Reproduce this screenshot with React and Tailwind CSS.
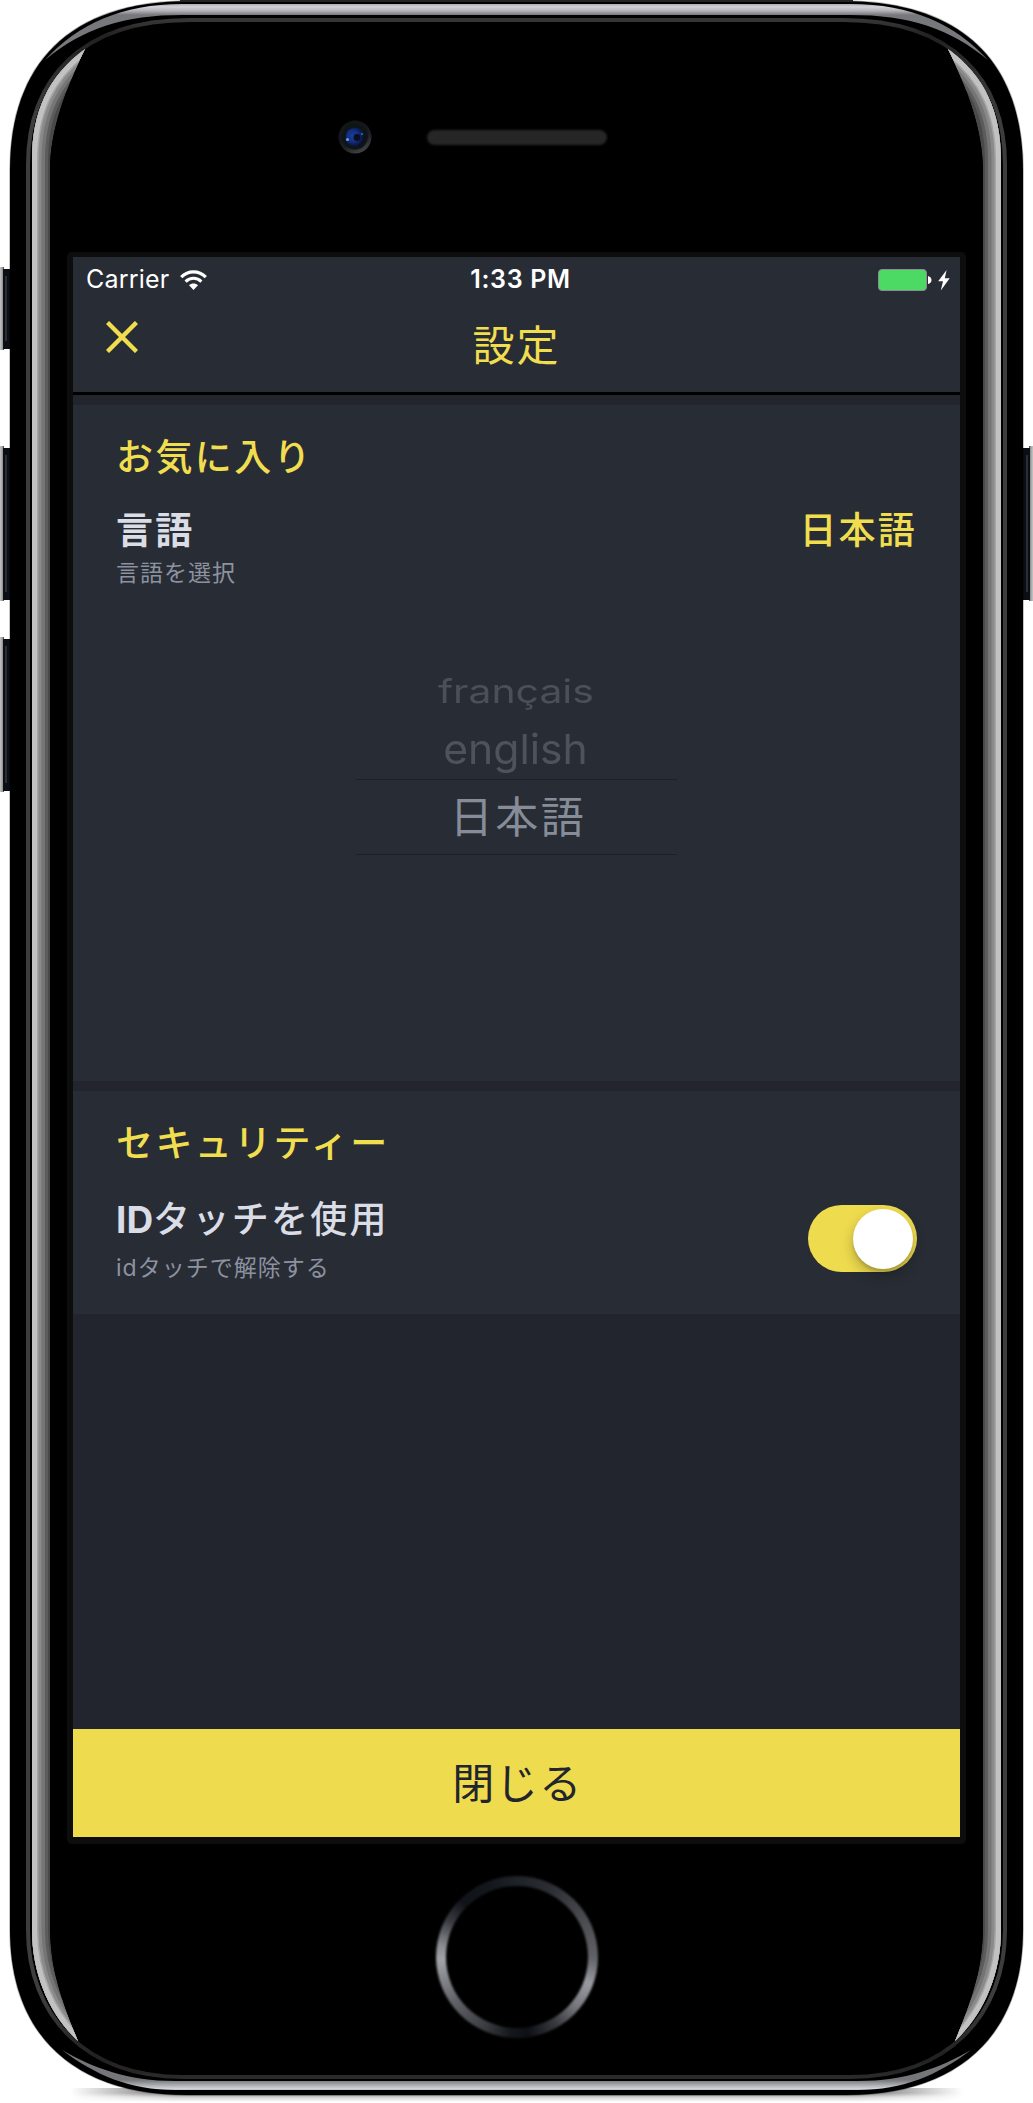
import React from "react";

const BODY =
  "M10 170C10 65 68 1 190 1H843C965 1 1023 65 1023 170V1930C1023 2036 958 2095 846 2095H187C75 2095 10 2036 10 1930Z";
const RING =
  "M28 165C28 80 80 20 190 20H843C953 20 1005 80 1005 165V1930C1005 2015 948 2077 850 2077H183C85 2077 28 2015 28 1930Z";
const GLINT =
  "M85 49C48 76 32 112 32 160V1930C32 1975 50 2015 78 2041C62 2003 50 1970 50 1925V170C50 130 66 88 85 49Z";
const GLINT_EDGE = "M85 49C48 76 32 112 32 160V1930C32 1975 50 2015 78 2041";

function SideGlint() {
  return (
    <g clipPath="url(#glintClip)" fill="none">
      <path d={GLINT} fill="#4a4a4a" />
      <path d={GLINT_EDGE} stroke="#5c5c5c" strokeWidth="32" />
      <path d={GLINT_EDGE} stroke="#757575" strokeWidth="26" />
      <path d={GLINT_EDGE} stroke="#8a8a8a" strokeWidth="19" />
      <path d={GLINT_EDGE} stroke="#a5a5a5" strokeWidth="13" />
      <path d={GLINT_EDGE} stroke="#c2c2c2" strokeWidth="10" />
    </g>
  );
}

function SideButton({ y, h }) {
  return (
    <g>
      <rect x="0" y={y} width="4" height={h} fill="url(#btn)" />
      <rect x="3" y={y + 2} width="9" height={h - 3} fill="#0b0e14" />
      <rect x="5" y={y + 9} width="2" height={h - 18} fill="#2b2e36" />
    </g>
  );
}

function PhoneShell() {
  return (
    <svg className="absolute inset-0" width="1033" height="2103" viewBox="0 0 1033 2103" aria-hidden="true">
      <defs>
        <linearGradient id="btn">
          <stop offset="0" stopColor="#c4c6c6" />
          <stop offset="0.6" stopColor="#9c9e9e" />
          <stop offset="1" stopColor="#333" />
        </linearGradient>
        <linearGradient id="topBand" x1="0" y1="4" x2="0" y2="15" gradientUnits="userSpaceOnUse">
          <stop offset="0" stopColor="#aaaab0" />
          <stop offset="0.25" stopColor="#d2d2d8" />
          <stop offset="0.6" stopColor="#b4b4ba" />
          <stop offset="1" stopColor="#77787c" />
        </linearGradient>
        <linearGradient id="bottomBand" x1="0" y1="2080" x2="0" y2="2091" gradientUnits="userSpaceOnUse">
          <stop offset="0" stopColor="#75767a" />
          <stop offset="0.5" stopColor="#b0b1b6" />
          <stop offset="0.8" stopColor="#d4d5da" />
          <stop offset="1" stopColor="#a0a1a5" />
        </linearGradient>
        <linearGradient id="ringTone" x1="0" y1="20" x2="0" y2="2077" gradientUnits="userSpaceOnUse">
          <stop offset="0" stopColor="#363636" />
          <stop offset="0.008" stopColor="#222" />
          <stop offset="0.05" stopColor="#3e3e3e" />
          <stop offset="0.96" stopColor="#3e3e3e" />
          <stop offset="0.99" stopColor="#222" />
          <stop offset="1" stopColor="#2a2a2a" />
        </linearGradient>
        <linearGradient id="under" x1="0" y1="2093" x2="0" y2="2102" gradientUnits="userSpaceOnUse">
          <stop offset="0" stopColor="#6d6d6d" />
          <stop offset="0.45" stopColor="#cfcfcf" />
          <stop offset="1" stopColor="#fff" />
        </linearGradient>
        <linearGradient id="fade">
          <stop offset="0" stopColor="#000" />
          <stop offset="0.12" stopColor="#fff" />
          <stop offset="0.88" stopColor="#fff" />
          <stop offset="1" stopColor="#000" />
        </linearGradient>
        <mask id="fadeMask">
          <rect x="70" y="2080" width="893" height="23" fill="url(#fade)" />
        </mask>
        <clipPath id="glintClip">
          <path d={GLINT} />
        </clipPath>
        <filter id="soft">
          <feGaussianBlur stdDeviation="0.6" />
        </filter>
      </defs>
      <rect x="70" y="2088" width="893" height="15" fill="url(#under)" mask="url(#fadeMask)" />
      <SideButton y={267} h={83} />
      <SideButton y={446} h={155} />
      <SideButton y={637} h={155} />
      <g transform="translate(1033 0) scale(-1 1)">
        <SideButton y={446} h={155} />
      </g>
      <path d={BODY} fill="#000" stroke="#000" strokeOpacity="0.3" strokeWidth="1.5" />
      <path d="M180 1H853" stroke="#242424" strokeWidth="2" />
      <g filter="url(#soft)">
        <path
          d="M45 60C78 24 122 4 182 4H851C911 4 955 24 988 60C950 28 908 15 851 15H182C125 15 83 28 45 60Z"
          fill="url(#topBand)"
        />
        <path
          d="M62 2050C95 2075 130 2090 175 2090H858C903 2090 938 2075 971 2050C940 2068 905 2081 858 2081H175C128 2081 93 2068 62 2050Z"
          fill="url(#bottomBand)"
        />
        <path d={RING} fill="none" stroke="url(#ringTone)" strokeWidth="4" />
        <SideGlint />
        <g transform="translate(1033 0) scale(-1 1)">
          <SideGlint />
        </g>
      </g>
      <rect x="67" y="252" width="899" height="1592" rx="5" fill="#0f0f0f" filter="url(#soft)" />
    </svg>
  );
}

function Camera() {
  return (
    <svg width="36" height="36" viewBox="0 0 36 36" aria-hidden="true">
      <defs>
        <linearGradient id="camRim" x1="0.2" y1="0" x2="0.75" y2="1">
          <stop offset="0" stopColor="#101216" />
          <stop offset="0.6" stopColor="#1b1c20" />
          <stop offset="1" stopColor="#46474c" />
        </linearGradient>
        <radialGradient id="lens" cx="0.4" cy="0.45" r="0.6">
          <stop offset="0" stopColor="#1a3f9c" />
          <stop offset="0.55" stopColor="#122c7c" />
          <stop offset="1" stopColor="#080c1e" />
        </radialGradient>
        <filter id="lensSoft">
          <feGaussianBlur stdDeviation="0.7" />
        </filter>
      </defs>
      <g filter="url(#lensSoft)">
        <circle cx="18" cy="18" r="16.5" fill="url(#camRim)" />
        <circle cx="18" cy="17.5" r="13" fill="#111318" />
        <circle cx="18" cy="18" r="9.5" fill="url(#lens)" />
        <circle cx="20" cy="18.5" r="3.4" fill="#070c24" />
        <circle cx="10.5" cy="20.5" r="1.6" fill="#5da0dc" />
        <circle cx="25" cy="15" r="1.1" fill="#2f6bc0" />
      </g>
    </svg>
  );
}

function HomeButton() {
  return (
    <div className="flex size-[162px] items-center justify-center rounded-full bg-[conic-gradient(#20222a_0deg,#2c2d33_25deg,#4a4b50_60deg,#606166_90deg,#9a9ba0_110deg,#77787d_130deg,#38393e_150deg,#0e1015_172deg,#15171c_185deg,#3c3d42_205deg,#626368_235deg,#a2a3a8_268deg,#8c8d92_278deg,#3a3b40_298deg,#101318_315deg,#14171c_340deg,#20222a_360deg)] blur-[0.8px]">
      <div className="size-[142px] rounded-full bg-black" />
    </div>
  );
}

function WifiIcon() {
  return (
    <svg width="27" height="21" viewBox="0 0 27 21" fill="none" stroke="#fff" aria-hidden="true">
      <path d="M1.2 7.2C8.2 0 18.8 0 25.8 7.2" strokeWidth="3.2" />
      <path d="M5.6 11.6C10.1 7.2 16.9 7.2 21.4 11.6" strokeWidth="3" />
      <path d="M9 15.3C11.3 12.9 15.7 12.9 18 15.3L13.5 20Z" fill="#fff" stroke="none" />
    </svg>
  );
}

function Battery() {
  return (
    <div className="flex items-center">
      <div className="h-[22px] w-[49px] rounded-[4px] border-[1.5px] border-[#8b8d93] bg-[#4cd964]" />
      <svg className="ml-[1px]" width="4" height="8" viewBox="0 0 4 8" aria-hidden="true">
        <path d="M0 0Q3.5 1 3.5 4T0 8Z" fill="#fff" />
      </svg>
      <svg className="ml-[6px]" width="12" height="21" viewBox="0 0 12 21" aria-hidden="true">
        <path d="M8.6 0L0.2 11.3H5L2.8 20.6L11.7 8.2H6.8Z" fill="#fff" />
      </svg>
    </div>
  );
}

function StatusBar() {
  return (
    <div className="grid h-[46px] grid-cols-3 items-center pr-[10px] pl-[13px] text-[25px] text-white">
      <div className="flex items-center gap-[11px]">
        <span className="tracking-[0.2px]">Carrier</span>
        <WifiIcon />
      </div>
      <span className="pl-[5px] text-center font-semibold tracking-[0.7px]">1:33 PM</span>
      <div className="flex justify-end">
        <Battery />
      </div>
    </div>
  );
}

function NavBar() {
  return (
    <div className="grid h-[92px] grid-cols-3 border-b-[3px] border-black text-[#f1de4f]">
      <button className="ml-[33px] mt-[18px] size-[32px]" aria-label="close">
        <svg width="32" height="32" viewBox="0 0 32 32" stroke="currentColor" strokeWidth="4.4" aria-hidden="true">
          <path d="M1.5 1.5L30.5 30.5M30.5 1.5L1.5 30.5" />
        </svg>
      </button>
      <h1 className="pt-[13px] text-center text-[42px] leading-[60px] tracking-[2px]">設定</h1>
    </div>
  );
}

function Toggle() {
  return (
    <div className="flex h-[67px] w-[109px] items-center justify-end rounded-full bg-[#efdc4e] pr-[4px]">
      <div className="size-[60px] rounded-full bg-white shadow-[0_6px_14px_rgba(0,0,0,0.25),0_3px_3px_rgba(0,0,0,0.12)]" />
    </div>
  );
}

function LanguagePicker() {
  return (
    <div className="flex flex-col items-center">
      <div className="flex h-[42px] items-center text-[33px] leading-[42px] text-[#4b4f5a]">
        <span className="-ml-[2px] inline-block scale-x-[1.24]">français</span>
      </div>
      <div className="mt-[8px] flex h-[58px] items-center text-[41px] leading-[58px] text-[#4e525d]">
        <span className="-ml-[1px] inline-block scale-x-[1.04]">english</span>
      </div>
      <div className="mt-px flex h-[76px] w-[321px] items-center justify-center border-y border-[#1e2024] text-[43px] leading-[74px] text-[#868d99]">
        <span className="pl-[3px] tracking-[2.5px]">日本語</span>
      </div>
    </div>
  );
}

export default function App() {
  return (
    <div className="relative h-[2103px] w-[1033px] overflow-hidden bg-white font-['Inter','Noto_Sans_CJK_JP',sans-serif]">
      <PhoneShell />
      <div className="relative flex h-full flex-col items-center">
        <div className="flex h-[257px] w-full items-start pt-[119px]">
          <div className="ml-[337px]">
            <Camera />
          </div>
          <div className="mt-[11px] ml-[54px] h-[15px] w-[180px] rounded-full bg-[#262626] blur-[1px]" />
        </div>

        <main className="flex h-[1580px] w-[887px] flex-col bg-[#22252d]">
          <header className="h-[138px] bg-[#282c34]">
            <StatusBar />
            <NavBar />
          </header>

          <section className="mt-[10px] h-[676px] bg-[#282c34] pr-[43px] pl-[43px] pt-[28px]">
            <h2 className="text-[37px] leading-[50px] font-medium tracking-[2.4px] text-[#f1de4f]">お気に入り</h2>
            <div className="mt-[23px] flex justify-between text-[37px] leading-[50px] tracking-[2.2px]">
              <span className="font-bold text-[#dadde6]">言語</span>
              <span className="font-medium text-[#f1de4f]">日本語</span>
            </div>
            <p className="mt-[2px] text-[23px] leading-[30px] tracking-[1px] text-[#8d92a0]">言語を選択</p>
            <div className="mt-[82px]">
              <LanguagePicker />
            </div>
          </section>

          <section className="mt-[10px] h-[223px] bg-[#282c34] pr-[43px] pl-[43px] pt-[28px]">
            <h2 className="text-[37px] leading-[50px] font-medium tracking-[2.4px] text-[#f1de4f]">セキュリティー</h2>
            <div className="mt-[26px] flex justify-between">
              <div>
                <div className="text-[37px] leading-[50px] font-medium tracking-[2.3px] text-[#dadde6]">
                  <span className="font-bold tracking-normal">ID</span>タッチを使用
                </div>
                <p className="text-[23px] leading-[46px] tracking-[1px] text-[#8d92a0]">idタッチで解除する</p>
              </div>
              <div className="mt-[10px]">
                <Toggle />
              </div>
            </div>
          </section>

          <button className="mt-auto h-[108px] bg-[#efdc4e] pl-[2px] text-[42px] leading-[109px] tracking-[1.5px] text-[#22252d]">
            閉じる
          </button>
        </main>

        <div className="mt-[39px]">
          <HomeButton />
        </div>
      </div>
    </div>
  );
}
